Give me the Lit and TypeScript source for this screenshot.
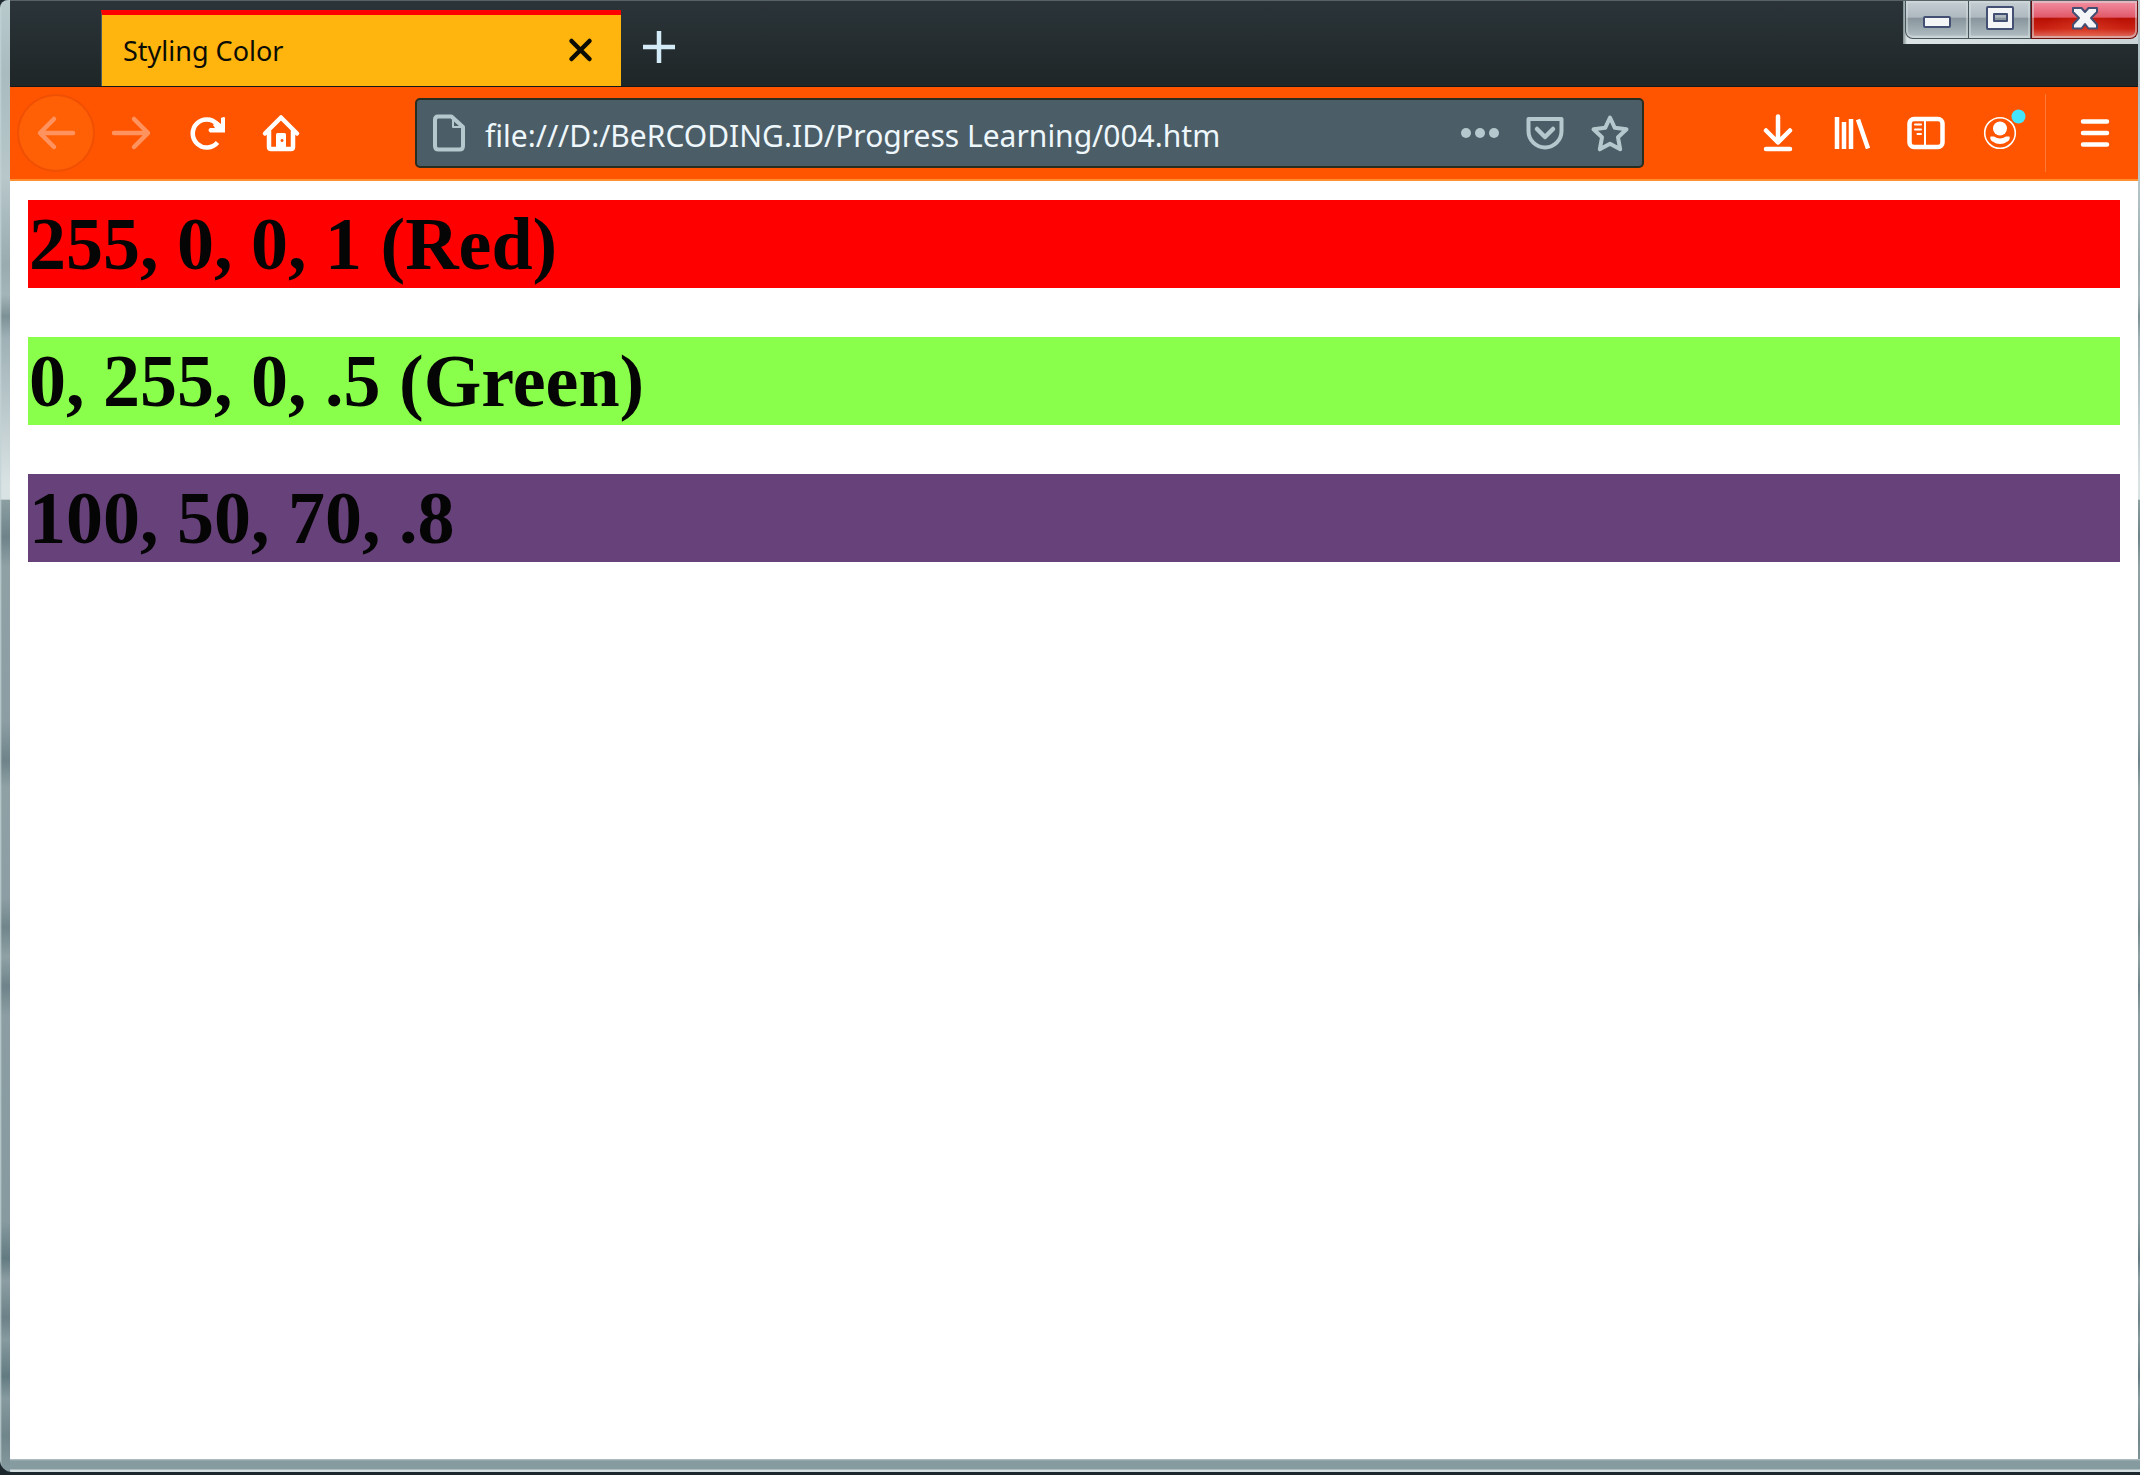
import { LitElement, html, css, svg } from "lit";
import { customElement, property, state } from "lit/decorators.js";

const icons: Record<string, unknown> = {
  back: svg`<path d="M37 20H5M18 6L4 20l14 14" class="s"/>`,
  forward: svg`<path d="M3 20h33M23 6l14 14-14 14" class="s"/>`,
  reload: svg`<path d="M31.500 29.500A14 14 0 1 1 31 11" class="s" stroke-linecap="butt"/><path d="M35 5q4-2 4 0v14.500H24q-3-2.500 0-4.500h5l-2-3 4-4 4 3z" class="f"/>`,
  home: svg`<path d="M4 20.500L20 4.500l16 16" class="s"/><path d="M8 18v16q0 2 2 2h20q2 0 2-2V18" class="s"/><path fill-rule="evenodd" class="f" d="M16.500 20h7q1.500 0 1.500 1.500V36H15V21.500q0-1.500 1.500-1.500zM21 26a1.500 1.500 0 1 0 .1 0z"/>`,
  page: svg`<path d="M9 3.500h13.500L34 14v19q0 3.500-3.500 3.500h-21Q6 36.500 6 33V7q0-3.500 3-3.500z" class="s thin"/><path d="M24 4v10h10" class="s hair"/>`,
  dots: svg`<circle cx="6" cy="20" r="5" class="f"/><circle cx="20" cy="20" r="5" class="f"/><circle cx="34" cy="20" r="5" class="f"/>`,
  pocket: svg`<path d="M3.500 6h33v12a16.500 16.500 0 0 1-33 0z" class="s thin"/><path d="M12 16l8 8 8-8" class="s"/>`,
  star: svg`<path d="M20 4.500l4.800 10.300 11.700 1.500-8.500 8 2.200 12L20 30.800l-10.200 5.500 2.200-12-8.500-8 11.700-1.500z" class="s thin"/>`,
  download: svg`<path d="M20 3.500V28M8 17.500l12 12 12-12" class="s"/><path d="M8 36h24" class="s"/>`,
  library: svg`<path d="M5 4v32M12 9v27M19 6v30M26 6.500L36 35.500" class="s" stroke-linecap="butt"/>`,
  sidebar: svg`<rect x="3.500" y="6" width="33" height="28" rx="4.500" class="s"/><path d="M19 5v30" class="s hair"/><path d="M9 11.500h6M9 16.500h6M11.500 21h3.500" class="s hair"/>`,
  account: svg`<circle cx="20" cy="20" r="15.300" class="s line"/><circle cx="20" cy="15.500" r="7" class="f"/><path d="M10.500 23.500h3.500q6 4 12 0h3.500q1 3-2 5-7.500 5-15 0-3-2-2-5z" class="f"/><circle cx="38.500" cy="3.500" r="7" class="badge"/>`,
  menu: svg`<path d="M8 8.500h24M8 20h24M8 31.500h24" class="s"/>`,
  close: svg`<path d="M10.500 10l18 18M28.500 10l-18 18" class="s"/>`,
  plus: svg`<path d="M20 4v32M4 20h32" class="s" stroke-linecap="butt"/>`,
  minimize: svg`<rect x="7" y="17" width="26" height="10" rx="1" class="glass"/>`,
  maximize: svg`<path fill-rule="evenodd" d="M7 8q0-1 1-1h24q1 0 1 1v20q0 1-1 1H8q-1 0-1-1zM14 14v7h13v-7z" class="glass"/>`,
  quit: svg`<path d="M8 8h8.500l3.500 4 3.500-4H32v4l-6 6 6 6.500v4h-8.500L20 24l-3.500 4.500H8v-4l6-6.500-6-6z" class="glass"/>`,
};

@customElement("ui-icon")
export class UiIcon extends LitElement {
  @property() name = "";

  static styles = css`
    :host { display: block; width: 40px; height: 40px; flex: none; }
    svg { display: block; overflow: visible; }
    .s { fill: none; stroke: currentColor; stroke-width: 4.5; stroke-linecap: round; stroke-linejoin: round; }
    .s[stroke-linecap="butt"] { stroke-linecap: butt; }
    .thin { stroke-width: 4; }
    .hair { stroke-width: 2; }
    .line { stroke-width: 1.6; }
    .f { fill: currentColor; }
    .badge { fill: #45e6fb; }
    .glass { fill: #f3f5f7; stroke: #434f73; stroke-width: 2; stroke-linejoin: round; }
  `;

  render() {
    return html`<svg width="40" height="40" viewBox="0 0 40 40" aria-hidden="true">${icons[this.name]}</svg>`;
  }
}

@customElement("app-root")
export class AppRoot extends LitElement {
  @state() private url = "file:///D:/BeRCODING.ID/Progress Learning/004.htm";

  static styles = css`
    :host { display: block; font-family: "Noto Sans", "Open Sans", sans-serif; }
    * { box-sizing: border-box; }
    button { border: 0; padding: 0; margin: 0; background: none; color: inherit; display: flex; align-items: center; justify-content: center; }

    .desktop { min-height: 100vh; display: flex; background: #1c282e; padding-bottom: 3px; }
    .window {
      flex: 1; min-width: 0; display: flex; flex-direction: column;
      padding: 0 2px 13px 10px;
      border-bottom-left-radius: 12px; border-top-left-radius: 8px;
      background:
        linear-gradient(to right, #c2d2d5, transparent 2px) 0 0 / 10px 100% no-repeat,
        linear-gradient(to top, #d3dfe1 0 2px, #869b9f 3px 11px, #b7c5c8 13px) 10px 100% / 100% 13px no-repeat,
        linear-gradient(to bottom, #b9cacd 0, #a9bbbf 5%, #b7c7ca 12%, #9aabb0 18%, #a4b5b9 20%, #7c9196 21.500%, #9fb1b6 23%, #dae3e4 33%, #dae3e4 33.900%, #8b9ea2 34%, #6e848a 36.500%, #8fa1a5 38.500%, #8c9ea3 49%, #6e848a 51.700%, #8fa1a5 53.500%, #8c9ea3 61%, #70868b 63%, #8fa1a5 65%, #6e848a 67%, #8c9ea3 69%, #869a9f 83%, #627b81 85.500%, #8c9ea3 87%, #6c8288 89.500%, #869a9f 91%, #627b81 93.500%, #869a9f 95%, #70868b 97.500%, #869b9f 100%);
    }

    .titlebar { height: 87px; display: flex; background: linear-gradient(#2b3439, #1e2627); border-top: 1px solid #566266; border-bottom: 1px solid #151817; }
    .tab {
      align-self: flex-end; width: 520px; height: 76px; margin-left: 91px; padding: 0 20px 0 21px;
      display: flex; align-items: center; justify-content: space-between;
      background: #ffb50d; color: #0b0d05; border-top: 5px solid #fe0000; border-left: 1px solid #4c5b62;
    }
    .tab-title { font-size: 27px; line-height: 36px; }
    .new-tab { width: 76px; height: 92px; color: #d3ebf7; }
    .controls { margin-left: auto; align-self: flex-start; display: flex; height: 43px; padding: 0 0 5px 2px; background: linear-gradient(to right, #7c8a8e, #dce4e5 4px, #c9d4d6); }
    .control { height: 38px; width: 64px; border: 1px solid #46545c; border-top: 0; box-shadow: inset 0 0 0 2px #d5dde080; background: linear-gradient(#c5ced3, #aeb9bf 44%, #87949b 46%, #aab8bd 90%, #c8d3d6); }
    .control:first-child { border-bottom-left-radius: 8px; }
    .control.mid { width: 62px; border-left: 0; }
    .control.quit { width: 107px; border-color: #6d0d0d; border-bottom-right-radius: 8px; background: radial-gradient(ellipse at 50% 100%, #f0603c66, transparent 60%), linear-gradient(#f291a3, #e0596b 44%, #b80f05 46%, #c92112 75%, #e0756a); }

    .toolbar { height: 94px; display: flex; align-items: center; padding: 0 6px 0 9px; background: #ff5400; color: #fff; border-bottom: 2px solid #ff902f; }
    .group { display: flex; gap: 1px; }
    .actions { gap: 0; }
    .tool { width: 74px; height: 74px; }
    .dim { color: #ff935f; }
    .round { border-radius: 50%; background: #ff6005; box-shadow: 0 0 0 2px #f05003; }
    .divider { width: 1px; height: 78px; margin: 0 12px 0 8px; background: #ff7a35; }
    .urlbar { flex: 1; min-width: 0; height: 70px; margin: 0 97px; display: flex; align-items: center; padding: 0 12px; background: #4b5d67; border: 2px solid #282d20; border-radius: 5px; color: #b5c8cd; }
    .urlbar input { flex: 1; min-width: 0; height: 60px; margin-left: 16px; padding: 4px 0 0; border: 0; outline: 0; background: none; color: #eef7fb; font: 30px/40px "Noto Sans", "Open Sans", sans-serif; }
    .url-actions { display: flex; gap: 25px; }

    .page { flex: 1; padding: 19px 18px; background: #fff; display: flex; flex-direction: column; gap: 49px; }
    .swatch { margin: 0; padding: 1px 0 0 1px; font: bold 74px/87px "Liberation Serif", serif; color: #050505; }
    .red { background: #ff0000; }
    .green { background: #8aff4b; }
    .plum { background: #67417a; }
  `;

  private tool(icon: string, label: string, extra = "") {
    return html`<button class="tool ${extra}" aria-label=${label}><ui-icon name=${icon}></ui-icon></button>`;
  }

  private onUrl(e: Event) {
    this.url = (e.target as HTMLInputElement).value;
  }

  render() {
    return html`
      <div class="desktop">
        <div class="window">
          <header class="titlebar">
            <div class="tab">
              <span class="tab-title">Styling Color</span>
              <button aria-label="Close tab"><ui-icon name="close"></ui-icon></button>
            </div>
            <button class="new-tab" aria-label="New tab"><ui-icon name="plus"></ui-icon></button>
            <div class="controls">
              <button class="control" aria-label="Minimize"><ui-icon name="minimize"></ui-icon></button>
              <button class="control mid" aria-label="Maximize"><ui-icon name="maximize"></ui-icon></button>
              <button class="control quit" aria-label="Close window"><ui-icon name="quit"></ui-icon></button>
            </div>
          </header>
          <nav class="toolbar">
            <div class="group">
              ${this.tool("back", "Back", "dim round")}
              ${this.tool("forward", "Forward", "dim")}
              ${this.tool("reload", "Reload")}
              ${this.tool("home", "Home")}
            </div>
            <div class="urlbar">
              <ui-icon name="page"></ui-icon>
              <input type="text" aria-label="Address" spellcheck="false" .value=${this.url} @input=${this.onUrl} />
              <div class="url-actions">
                <button aria-label="Page actions"><ui-icon name="dots"></ui-icon></button>
                <button aria-label="Save to Pocket"><ui-icon name="pocket"></ui-icon></button>
                <button aria-label="Bookmark this page"><ui-icon name="star"></ui-icon></button>
              </div>
            </div>
            <div class="group actions">
              ${this.tool("download", "Downloads")}
              ${this.tool("library", "Library")}
              ${this.tool("sidebar", "Sidebars")}
              ${this.tool("account", "Account")}
            </div>
            <span class="divider"></span>
            ${this.tool("menu", "Open menu")}
          </nav>
          <main class="page">
            <h1 class="swatch red">255, 0, 0, 1 (Red)</h1>
            <h1 class="swatch green">0, 255, 0, .5 (Green)</h1>
            <h1 class="swatch plum">100, 50, 70, .8</h1>
          </main>
        </div>
      </div>
    `;
  }
}
